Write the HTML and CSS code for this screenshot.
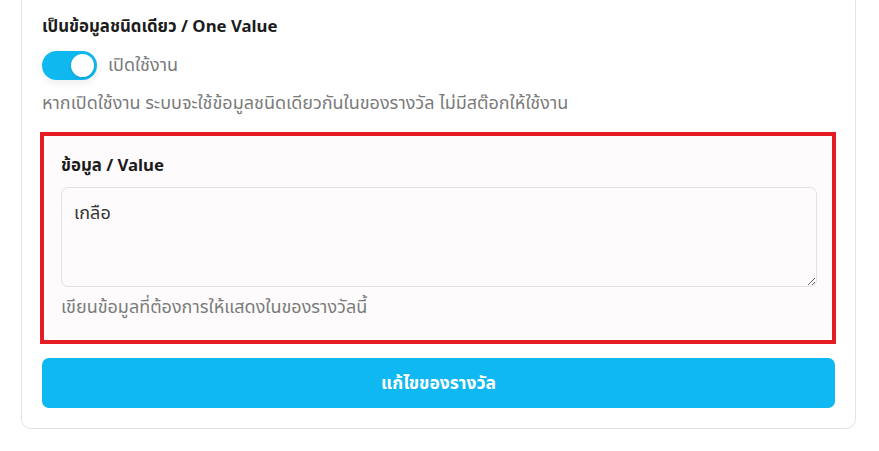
FILE: index.html
```html
<!DOCTYPE html>
<html lang="th">
<head>
<meta charset="utf-8">
<link rel="stylesheet" href="styles.css">
</head>
<body>
<div class="card">
  <div class="field">
    <div class="label">เป็นข้อมูลชนิดเดียว / One Value</div>
    <div class="toggle-row">
      <span class="toggle"><span class="knob"></span></span>
      <span class="toggle-text">เปิดใช้งาน</span>
    </div>
    <div class="hint">หากเปิดใช้งาน ระบบจะใช้ข้อมูลชนิดเดียวกันในของรางวัล ไม่มีสต๊อกให้ใช้งาน</div>
  </div>
  <div class="highlight">
    <div class="label">ข้อมูล / Value</div>
    <textarea class="textarea">เกลือ</textarea>
    <div class="hint">เขียนข้อมูลที่ต้องการให้แสดงในของรางวัลนี้</div>
  </div>
  <button class="submit">แก้ไขของรางวัล</button>
</div>
</body>
</html>
```
FILE: styles.css
```css
html, body {
  margin: 0;
  padding: 0;
  background: #ffffff;
}
body {
  font-family: "Noto Sans", "Noto Sans Thai", "Noto Sans CJK SC", sans-serif;
  color: #1c1c1c;
  padding: 0 23px 0 21px;
}
.card {
  margin-top: -20px;
  border: 1px solid #e3e3e3;
  border-radius: 0 0 10px 10px;
  padding: 33px 20px 20px 20px;
  display: flex;
  flex-direction: column;
}
.field {
  display: flex;
  flex-direction: column;
}
.label {
  font-size: 16.8px;
  font-weight: 700;
  line-height: 24px;
}
.toggle-row {
  display: flex;
  align-items: center;
  gap: 11px;
  margin-top: 13px;
}
.toggle {
  width: 55px;
  height: 29px;
  border-radius: 15px;
  background: #0fb8ef;
  display: flex;
  align-items: center;
  justify-content: flex-end;
  padding-right: 3px;
  box-sizing: border-box;
  box-shadow: 0 3px 8px rgba(0,0,0,0.08);
}
.knob {
  width: 23px;
  height: 23px;
  border-radius: 50%;
  background: #fff;
  box-shadow: 0 1px 3px rgba(0,0,0,0.15);
}
.toggle-text {
  font-size: 18px;
  color: #7a7a7a;
}
.hint {
  font-size: 18px;
  color: #7b7b7b;
  line-height: 24px;
  margin-top: 10px;
}
.highlight {
  margin: 18px -1px 0 -2px;
  border: 4px solid #e31d22;
  background: #fdfbfc;
  padding: 17px 15px 22px 17px;
  display: flex;
  flex-direction: column;
}
.textarea {
  margin-top: 10px;
  height: 100px;
  box-sizing: border-box;
  border: 1px solid #e2e2e2;
  border-radius: 7px;
  background: #fdfbfc;
  padding: 12px 12px;
  font-family: inherit;
  font-size: 18px;
  color: #333;
  resize: vertical;
}
.highlight .hint {
  margin-top: 7px;
}
.submit {
  margin-top: 14px;
  height: 50px;
  border: 0;
  border-radius: 7px;
  background: #0fb8f1;
  color: #fff;
  font-family: inherit;
  font-size: 17.5px;
  font-weight: 700;
}
```
